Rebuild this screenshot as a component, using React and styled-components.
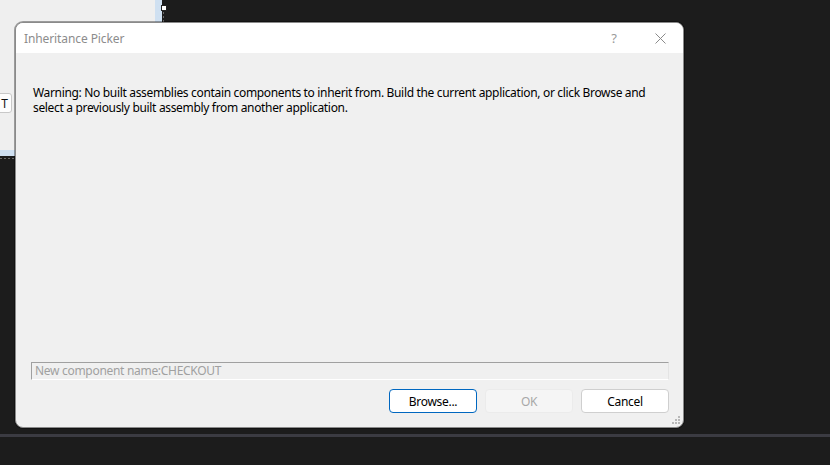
import React from "react";
import styled, { createGlobalStyle } from "styled-components";

const Global = createGlobalStyle`
  html, body { margin: 0; padding: 0; background: #1c1c1c; }
  body { font-family: "Noto Sans", "Segoe UI", sans-serif; }
  * { box-sizing: border-box; }
`;

const Desktop = styled.div`
  position: relative;
  width: 830px;
  height: 465px;
  background: #1c1c1c;
  overflow: hidden;
`;

const DesignSurface = styled.div`
  position: absolute;
  left: 0;
  top: 0;
  width: 162px;
  height: 156px;
  background: #efefef;
  border-right: 7px solid #cfe0f1;
  border-bottom: 6px solid #cfe0f1;
`;

const DottedEdgeH = styled.div`
  position: absolute;
  left: 0;
  top: 158px;
  width: 162px;
  height: 1px;
  background: repeating-linear-gradient(90deg, #6a6a6a 0 2px, transparent 2px 4px);
`;

const DottedEdgeV = styled.div`
  position: absolute;
  left: 163px;
  top: 12px;
  width: 1px;
  height: 146px;
  background: repeating-linear-gradient(180deg, #6a6a6a 0 2px, transparent 2px 4px);
`;

const Handle = styled.div`
  position: absolute;
  left: 161px;
  top: 5px;
  width: 6px;
  height: 6px;
  background: #ffffff;
  border: 1px solid #222;
`;

const SurfaceButton = styled.div`
  position: absolute;
  left: -10px;
  top: 93px;
  width: 22px;
  height: 20px;
  background: #fdfdfd;
  border: 1px solid #c8c8c8;
  border-radius: 3px;
  font-size: 12px;
  color: #111;
  display: flex;
  align-items: center;
  justify-content: flex-end;
  padding-right: 3px;
`;

const BottomRule = styled.div`
  position: absolute;
  left: 0;
  top: 434px;
  width: 830px;
  height: 3px;
  background: #3b3b42;
`;

const Window = styled.div`
  position: absolute;
  left: 15px;
  top: 22px;
  width: 669px;
  height: 406px;
  border: 1px solid #8a8a8a;
  border-radius: 8px;
  background: #f0f0f0;
  display: flex;
  flex-direction: column;
  overflow: hidden;
  box-shadow: 0 0 0 1px rgba(0,0,0,0.35);
`;

const TitleBar = styled.div`
  height: 30px;
  flex: none;
  background: #ffffff;
  display: flex;
  align-items: center;
  padding-left: 8px;
`;

const Title = styled.div`
  flex: 1;
  font-size: 12px;
  color: #8c8c8c;
  letter-spacing: -0.1px;
`;

const CaptionButton = styled.div`
  width: 46px;
  height: 30px;
  display: flex;
  align-items: center;
  justify-content: center;
  color: #9a9a9a;
  font-size: 13px;
`;

const Body = styled.div`
  flex: 1;
  display: flex;
  flex-direction: column;
  padding: 32px 14px 14px 17px;
`;

const Message = styled.p`
  margin: 0;
  font-size: 12px;
  line-height: 15px;
  color: #000;
  letter-spacing: -0.33px;
  flex: 1;
`;

const NameField = styled.div`
  height: 18px;
  margin-left: -2px;
  border-top: 1px solid #a0a0a0;
  border-left: 1px solid #a0a0a0;
  border-right: 1px solid #e4e4e4;
  border-bottom: 1px solid #ffffff;
  font-size: 12px;
  color: #a0a0a0;
  padding-left: 3px;
  line-height: 16px;
  letter-spacing: -0.3px;
`;

const ButtonRow = styled.div`
  display: flex;
  justify-content: flex-end;
  gap: 8px;
  margin-top: 9px;
`;

const Btn = styled.div`
  width: 88px;
  height: 24px;
  border-radius: 4px;
  display: flex;
  align-items: center;
  justify-content: center;
  font-size: 12px;
  letter-spacing: -0.3px;
  background: ${p => (p.$disabled ? "#f5f5f5" : "#ffffff")};
  color: ${p => (p.$disabled ? "#a8a8a8" : "#000")};
  border: 1px solid ${p => (p.$default ? "#0067c0" : p.$disabled ? "#ebebeb" : "#cfcfcf")};
`;

const Grip = styled.svg`
  position: absolute;
  right: 2px;
  bottom: 2px;
`;

export default function App() {
  return (
    <>
      <Global />
      <Desktop>
        <DesignSurface>
          <SurfaceButton>T</SurfaceButton>
        </DesignSurface>
        <DottedEdgeH />
        <DottedEdgeV />
        <Handle />
        <BottomRule />
        <Window>
          <TitleBar>
            <Title>Inheritance Picker</Title>
            <CaptionButton>?</CaptionButton>
            <CaptionButton>
              <svg width="11" height="11" viewBox="0 0 11 11">
                <path d="M0.5 0.5 L10.5 10.5 M10.5 0.5 L0.5 10.5" stroke="#8a8a8a" strokeWidth="1" fill="none" />
              </svg>
            </CaptionButton>
          </TitleBar>
          <Body>
            <Message>
              Warning: No built assemblies contain components to inherit from. Build the current application, or click Browse and select a previously built assembly from another application.
            </Message>
            <NameField>New component name:CHECKOUT</NameField>
            <ButtonRow>
              <Btn $default>Browse...</Btn>
              <Btn $disabled>OK</Btn>
              <Btn>Cancel</Btn>
            </ButtonRow>
          </Body>
          <Grip width="9" height="9" viewBox="0 0 9 9">
            <rect x="6" y="0" width="2" height="2" fill="#b8b8b8" />
            <rect x="3" y="3" width="2" height="2" fill="#b8b8b8" />
            <rect x="6" y="3" width="2" height="2" fill="#b8b8b8" />
            <rect x="0" y="6" width="2" height="2" fill="#b8b8b8" />
            <rect x="3" y="6" width="2" height="2" fill="#b8b8b8" />
            <rect x="6" y="6" width="2" height="2" fill="#b8b8b8" />
          </Grip>
        </Window>
      </Desktop>
    </>
  );
}
